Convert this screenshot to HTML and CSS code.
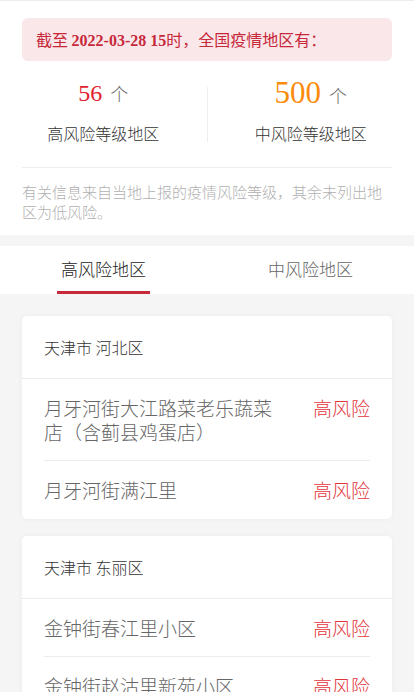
FILE: index.html
```html
<!DOCTYPE html>
<html lang="zh">
<head>
<meta charset="utf-8">
<link rel="stylesheet" href="styles.css">
</head>
<body>
<div class="top">
  <div class="notice">截至 <b class="date">2022-03-28 15</b>时，全国疫情地区有：</div>
  <div class="stats">
    <div class="col">
      <div class="num"><span class="n high">56</span><span class="unit">个</span></div>
      <div class="label">高风险等级地区</div>
    </div>
    <div class="divider"></div>
    <div class="col">
      <div class="num"><span class="n mid">500</span><span class="unit">个</span></div>
      <div class="label">中风险等级地区</div>
    </div>
  </div>
  <div class="note">有关信息来自当地上报的疫情风险等级，其余未列出地区为低风险。</div>
</div>
<div class="tabs">
  <div class="tab active"><span class="tab-text">高风险地区</span></div>
  <div class="tab"><span class="tab-text">中风险地区</span></div>
</div>
<div class="list">
  <div class="card">
    <div class="card-head">天津市 河北区</div>
    <div class="rows">
      <div class="row"><div class="name">月牙河街大江路菜老乐蔬菜店（含蓟县鸡蛋店）</div><div class="level">高风险</div></div>
      <div class="row"><div class="name">月牙河街满江里</div><div class="level">高风险</div></div>
    </div>
  </div>
  <div class="card">
    <div class="card-head">天津市 东丽区</div>
    <div class="rows">
      <div class="row"><div class="name">金钟街春江里小区</div><div class="level">高风险</div></div>
      <div class="row"><div class="name">金钟街赵沽里新苑小区</div><div class="level">高风险</div></div>
    </div>
  </div>
</div>
</body>
</html>
```
FILE: styles.css
```css
* { box-sizing: border-box; }
html, body { margin: 0; padding: 0; }
body {
  background: #f5f5f5;
  font-family: "Noto Sans CJK SC", "Noto Sans", sans-serif;
  font-weight: 300;
  color: #333;
  border-top: 1px solid #ececec;
}
.top {
  background: #fff;
  padding-top: 17px;
}
.notice {
  margin: 0 22px;
  height: 43px;
  background: #fae7e9;
  border-radius: 6px;
  padding-left: 14px;
  font-size: 16px;
  line-height: 43px;
  color: #c7293b;
  font-weight: 400;
}
.date {
  font-family: "Liberation Serif", serif;
  font-weight: bold;
}
.stats {
  display: flex;
  padding-top: 16px;
}
.col {
  flex: 1;
  text-align: center;
}
.divider {
  width: 1px;
  height: 55px;
  margin-top: 10px;
  background: #eeeeee;
}
.num {
  height: 32px;
  line-height: 32px;
  white-space: nowrap;
}
.n {
  font-family: "Liberation Serif", serif;
  font-weight: 400;
}
.n.high { font-size: 24px; color: #e2222f; }
.n.mid { font-size: 31px; color: #fb8b0b; }
.unit {
  margin-left: 8px;
  font-size: 18px;
  color: #666;
  font-weight: 300;
}
.label {
  margin-top: 13px;
  font-size: 16px;
  line-height: 22px;
  color: #333;
}
.note {
  margin: 23px 22px 0;
  border-top: 1px solid #eeeeee;
  padding: 14px 0 13px;
  font-size: 15px;
  line-height: 20px;
  color: #b0b0b0;
}
.tabs {
  margin-top: 11px;
  background: #fff;
  display: flex;
  height: 48px;
}
.tab {
  flex: 1;
  display: flex;
  justify-content: center;
}
.tab-text {
  display: block;
  width: 93px;
  text-align: center;
  font-size: 17px;
  line-height: 44px;
  padding-top: 1px;
  color: #666;
  border-bottom: 3px solid transparent;
}
.tab.active .tab-text {
  color: #222;
  border-bottom-color: #c7293b;
}
.list {
  padding: 22px 22px 0;
}
.card {
  background: #fff;
  border-radius: 5px;
  box-shadow: 0 0 6px rgba(0, 0, 0, 0.04);
  margin-bottom: 17px;
}
.card-head {
  padding: 19px 22px 19px;
  font-size: 16px;
  line-height: 24px;
  color: #333;
  border-bottom: 1px solid #ececec;
}
.rows {
  padding: 0 22px;
}
.row {
  display: flex;
  justify-content: space-between;
  align-items: flex-start;
  padding: 17px 0 16px;
  border-bottom: 1px solid #ececec;
}
.row:last-child {
  border-bottom: none;
  padding-bottom: 17px;
}
.name {
  width: 236px;
  font-size: 19px;
  line-height: 24px;
  color: #666;
}
.level {
  font-size: 19px;
  line-height: 24px;
  color: #e3333b;
  white-space: nowrap;
}
```
